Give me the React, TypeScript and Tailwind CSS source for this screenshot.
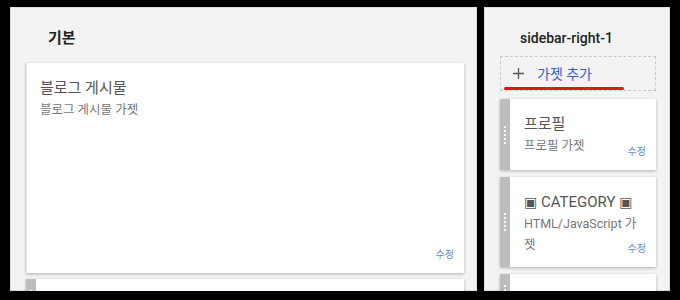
import { ReactNode } from "react"

const font = { fontFamily: '"Roboto", "Noto Sans CJK KR", sans-serif' }

function Handle() {
  return (
    <div className="flex w-[10px] shrink-0 flex-col items-center justify-center gap-[2px] bg-[#bdbdbd]">
      {[0, 1, 2, 3, 4].map((i) => (
        <span key={i} className="size-[2px] bg-white/90" />
      ))}
    </div>
  )
}

function Widget({ title, sub, height, handle = true, edit = true }: { title?: ReactNode; sub?: ReactNode; height: number; handle?: boolean; edit?: boolean }) {
  return (
    <div className="relative flex shrink-0 bg-white shadow-[0_1px_3px_rgba(0,0,0,0.28)]" style={{ height }}>
      {handle ? <Handle /> : <div className="w-px shrink-0 bg-[#e2e2e2]" />}
      <div className={handle ? "min-w-0 flex-1 pl-[14px] pr-[15px] pt-4" : "min-w-0 flex-1 pl-[13px] pt-4"}>
        <p className="text-[15px] leading-[18px] text-[#555]">{title}</p>
        <p className="mt-[2px] break-all text-[12.5px] leading-[21px] text-[#777]">{sub}</p>
      </div>
      {edit && <span className="absolute bottom-[12px] right-[10px] text-[10px] leading-3 text-[#6a8cd0]">수정</span>}
    </div>
  )
}

const box = <span className="text-[14px]" style={{ fontFamily: '"DejaVu Sans", sans-serif' }}>▣</span>

export default function App() {
  return (
    <div className="flex h-[300px] w-[680px] overflow-hidden bg-black pb-[9px] pl-[10px] pr-[10px] pt-[7px]" style={font}>
      <div className="flex w-full gap-[7px] overflow-hidden">
        <div className="w-[467px] shrink-0 border border-[#dcdcdc] bg-[#f3f3f3] pl-[15px] pr-[12px]">
          <div className="h-[55px] pl-[22px] pt-[20px]">
            <h2 className="text-[15px] font-bold leading-5 text-[#222]">기본</h2>
          </div>
          <div className="flex flex-col gap-[6px]">
            <Widget title="블로그 게시물" sub="블로그 게시물 가젯" height={210} handle={false} />
            <div className="flex h-[40px] bg-white shadow-[0_1px_3px_rgba(0,0,0,0.28)]">
              <Handle />
            </div>
          </div>
        </div>

        <div className="w-[186px] shrink-0 border border-[#dcdcdc] bg-[#f3f3f3] pl-[15px] pr-[13px]">
          <div className="h-[48px] pl-[20px] pt-[20px]">
            <h2 className="text-[14px] font-medium leading-5 text-[#222]">sidebar-right-1</h2>
          </div>
          <div className="relative flex h-[35px] items-center gap-[13px] border border-dashed border-[#c8c8c8] pl-[12px]">
            <svg width="11" height="11" viewBox="0 0 11 11" className="shrink-0">
              <path d="M5.5 0v11M0 5.5h11" stroke="#555" strokeWidth="1.3" />
            </svg>
            <span className="text-[14px] leading-5 text-[#2f63c9]">가젯 추가</span>
            <span className="absolute left-[3px] top-[30px] h-[3px] w-[120px] rounded-full bg-[#e8141c]" />
          </div>
          <div className="mt-[8px] flex flex-col gap-[7px]">
            <Widget title="프로필" sub="프로필 가젯" height={71} />
            <Widget title={<>{box} CATEGORY {box}</>} sub="HTML/JavaScript 가젯" height={90} />
            <Widget height={40} edit={false} />
          </div>
        </div>
      </div>
    </div>
  )
}
